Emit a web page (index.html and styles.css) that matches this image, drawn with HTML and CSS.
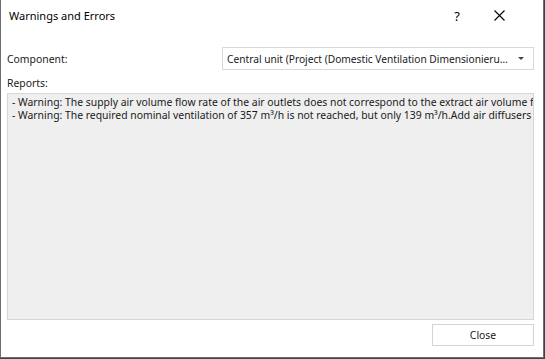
FILE: index.html
```html
<!DOCTYPE html>
<html lang="en">
<head>
    <meta charset="UTF-8">
    <title>Warnings and Errors</title>
    <link rel="stylesheet" href="styles.css">
</head>
<body>
    <div class="window">
        <div class="titlebar">
            <span class="title">Warnings and Errors</span>
            <span class="tb-button help">?</span>
            <span class="tb-button close">
                <svg width="11" height="11" viewBox="0 0 11 11">
                    <path d="M0.5 0.5 L10.5 10.5 M10.5 0.5 L0.5 10.5" stroke="#000" stroke-width="1.1" fill="none"/>
                </svg>
            </span>
        </div>
        <div class="content">
            <div class="row">
                <span class="label">Component:</span>
                <div class="combo">
                    <span class="combo-text">Central unit (Project (Domestic Ventilation Dimensionieru…</span>
                    <svg class="arrow" width="6" height="3" viewBox="0 0 6 3">
                        <path d="M0 0 L6 0 L3 3 Z" fill="#444"/>
                    </svg>
                </div>
            </div>
            <div class="label reports-label">Reports:</div>
            <div class="reports">
                <div class="line">- Warning: The supply air volume flow rate of the air outlets does not correspond to the extract air volume f</div>
                <div class="line">- Warning: The required nominal ventilation of 357 m³/h is not reached, but only 139 m³/h.Add air diffusers</div>
            </div>
            <div class="footer">
                <button class="btn">Close</button>
            </div>
        </div>
    </div>
</body>
</html>
```

FILE: styles.css
```css
body {
    margin: 0;
    background: #3b4350;
    font-family: 'Noto Sans', 'Open Sans', sans-serif;
    font-size: 10.4px;
    color: #1a1a1a;
}
.window {
    width: 542px;
    height: 357px;
    background: #fff;
    border: 1px solid #6e6e6e;
    border-top: none;
    display: flex;
    flex-direction: column;
}
.titlebar {
    height: 31px;
    display: flex;
    align-items: center;
    padding: 0 21px 0 8px;
}
.title {
    flex: 1;
    font-size: 11px;
    color: #000;
}
.tb-button {
    display: flex;
    justify-content: center;
    align-items: center;
    height: 31px;
}
.help {
    width: 38px;
    font-size: 13px;
    color: #000;
}
.close {
    width: 46px;
}
.content {
    flex: 1;
    display: flex;
    flex-direction: column;
    padding: 16px 9px 11px 6px;
}
.row {
    display: flex;
    align-items: center;
    justify-content: space-between;
    height: 23px;
}
.combo {
    height: 21px;
    border: 1px solid #d9d9d9;
    display: flex;
    align-items: center;
    padding: 0 9px 0 4px;
    width: 297px;
}
.combo-text {
    flex: 1;
    white-space: nowrap;
    font-size: 10.2px;
}
.arrow {
    margin-left: 4px;
}
.reports-label {
    margin-top: 6px;
    line-height: 14px;
}
.reports {
    margin-top: 3px;
    flex: 1;
    background: #efefef;
    border: 1px solid #d6d6d6;
    padding: 2px 0 0 4px;
    overflow: hidden;
    white-space: nowrap;
}
.line {
    line-height: 13px;
}
.footer {
    display: flex;
    justify-content: flex-end;
    margin-top: 4px;
}
.btn {
    width: 102px;
    height: 22px;
    background: #fff;
    border: 1px solid #d4d4d4;
    font-family: inherit;
    font-size: 10.4px;
    color: #1a1a1a;
    padding: 0;
}
```
